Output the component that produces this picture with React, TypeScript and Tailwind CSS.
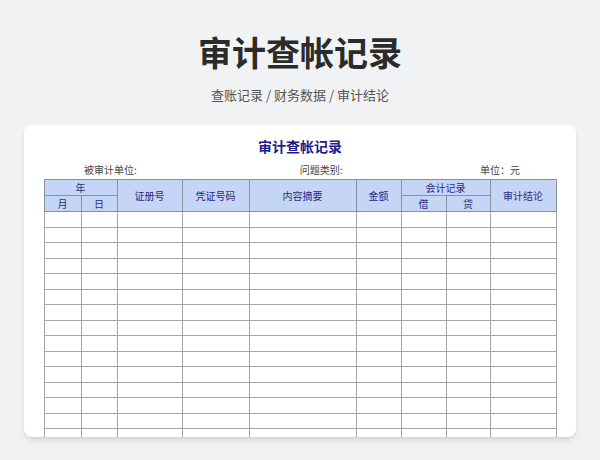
export default function App() {
  const cols = [37, 36, 65, 67, 107, 45, 45, 44, 66];
  const rows = Array.from({ length: 15 });
  const th = "border border-[#8a8f9a] bg-[#c5d5f5] text-[#2a2a80] font-normal text-[10px] p-0";
  return (
    <div className="w-[600px] h-[460px] bg-[#f1f2f4] flex flex-col items-center overflow-hidden" style={{ fontFamily: '"Noto Sans CJK SC", sans-serif' }}>
      <div className="mt-[28px] text-[34px] leading-[48px] font-bold text-[#2b2b2b]">审计查帐记录</div>
      <div className="mt-[10px] text-[13px] leading-[18px] text-[#555]">查账记录 / 财务数据 / 审计结论</div>
      <div className="mt-[21px] w-[552px] h-[312px] bg-white rounded-lg shadow-md overflow-hidden flex flex-col items-center">
        <div className="mt-[11px] text-[14px] leading-[20px] font-bold text-[#1c1c8c]">审计查帐记录</div>
        <div className="w-[512px] flex text-[10px] leading-[14px] text-[#444] mt-[7px] mb-[2px]">
          <span className="ml-[40px]">被审计单位:</span>
          <span className="ml-[163px]">问题类别:</span>
          <span className="ml-auto mr-[36px]">单位：元</span>
        </div>
        <table className="border-collapse w-[512px] table-fixed">
          <colgroup>{cols.map((w, i) => <col key={i} style={{ width: w }} />)}</colgroup>
          <thead>
            <tr className="h-[15px]">
              <th colSpan={2} className={th}>年</th>
              <th rowSpan={2} className={th}>证册号</th>
              <th rowSpan={2} className={th}>凭证号码</th>
              <th rowSpan={2} className={th}>内容摘要</th>
              <th rowSpan={2} className={th}>金额</th>
              <th colSpan={2} className={th}>会计记录</th>
              <th rowSpan={2} className={th}>审计结论</th>
            </tr>
            <tr className="h-[16px]">
              <th className={th}>月</th><th className={th}>日</th>
              <th className={th}>借</th><th className={th}>贷</th>
            </tr>
          </thead>
          <tbody>
            {rows.map((_, r) => (
              <tr key={r} className="h-[15.5px]">
                {cols.map((_, c) => <td key={c} className="border border-[#a4a6aa] p-0" />)}
              </tr>
            ))}
          </tbody>
        </table>
      </div>
    </div>
  );
}
